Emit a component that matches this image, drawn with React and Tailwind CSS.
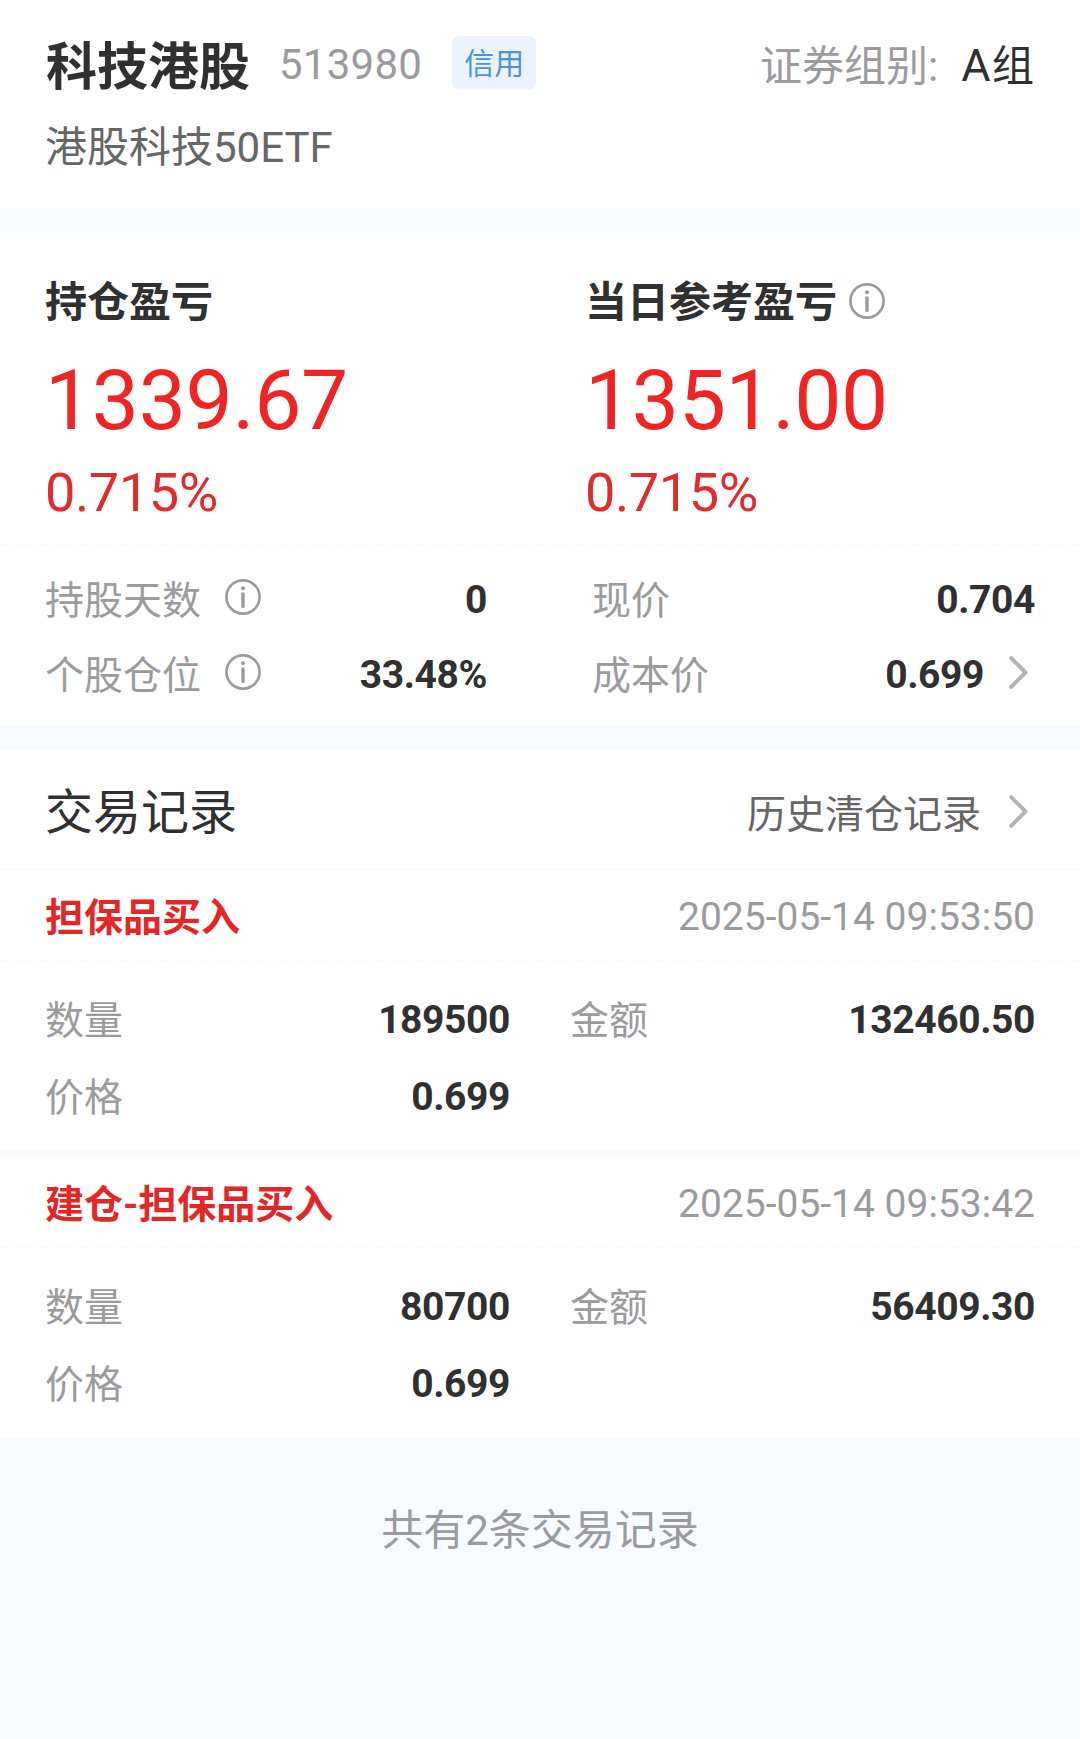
import React from 'react';

const trades = [
  {
    title: '担保品买入',
    time: '2025-05-14 09:53:50',
    quantity: '189500',
    amount: '132460.50',
    price: '0.699',
  },
  {
    title: '建仓-担保品买入',
    time: '2025-05-14 09:53:42',
    quantity: '80700',
    amount: '56409.30',
    price: '0.699',
  },
];

const InfoIcon = () => (
  <svg className="w-9 h-9 shrink-0" viewBox="0 0 36 36" fill="none" stroke="#9b9b9d">
    <circle cx="18" cy="18" r="16.6" strokeWidth="2.6" />
    <circle cx="18" cy="9.2" r="2" fill="#9b9b9d" stroke="none" />
    <path d="M18 15v12.5" strokeWidth="3.4" strokeLinecap="round" />
  </svg>
);

const ChevronIcon = () => (
  <svg className="w-[19px] h-[33px] shrink-0" viewBox="0 0 19 33" fill="none">
    <path d="M2.2 2.2l14.3 14.3L2.2 30.8" stroke="#b4b4b6" strokeWidth="4" strokeLinecap="round" strokeLinejoin="round" />
  </svg>
);

const Divider = () => <div className="h-px border-t border-dashed border-[#f8f8f9]"></div>;

const ProfitBlock = ({ label, amount, percent, info }) => (
  <div className="w-[541px] pl-[45px]">
    <div className="flex items-center gap-3 h-[60px] text-[42px] font-bold">
      <span className="mt-1">{label}</span>
      {info && <InfoIcon />}
    </div>
    <p className="mt-5 h-[100px] leading-[100px] text-[84px] tracking-[-0.35px] text-[#f02424]">{amount}</p>
    <p className="mt-3 h-[60px] leading-[60px] text-[54px] tracking-[-0.4px] text-[#df2c2c]">{percent}</p>
  </div>
);

const Field = ({ label, value, info, arrow }) => (
  <div className="flex items-center justify-between h-[75px] text-[39px]">
    <div className="flex items-center gap-6 text-[#9b9b9d]">
      <span className="mt-0.5">{label}</span>
      {info && (
        <span className="mb-2">
          <InfoIcon />
        </span>
      )}
    </div>
    <div className="flex items-center">
      <span className="font-bold tracking-[-0.4px]">{value}</span>
      {arrow && (
        <span className="ml-[25px] mr-[7px] mb-1.5">
          <ChevronIcon />
        </span>
      )}
    </div>
  </div>
);

const TradeField = ({ label, value }) => (
  <div className="flex items-center justify-between h-[77px]">
    <span className="mt-1 text-[#9b9b9d]">{label}</span>
    <span className="mt-0.5 font-bold tracking-[-0.4px]">{value}</span>
  </div>
);

const TradeCard = ({ trade }) => (
  <div className="bg-white">
    <div className="flex items-center justify-between h-[90px] px-[45px]">
      <span className="mt-[7px] text-[39px] font-bold text-[#e32626]">{trade.title}</span>
      <span className="mt-[5px] text-[39px] text-[#9b9b9d]">{trade.time}</span>
    </div>
    <Divider />
    <div className="grid grid-cols-[465px_465px] gap-x-[60px] h-[190px] pt-[20px] pb-[16px] pl-[45px] text-[39px]">
      <TradeField label="数量" value={trade.quantity} />
      <TradeField label="金额" value={trade.amount} />
      <TradeField label="价格" value={trade.price} />
    </div>
  </div>
);

const App = () => {
  return (
    <div className="w-[1080px] h-[1739px] bg-[#f7faff] text-[#303030] font-['Roboto','Noto_Sans_CJK_SC',sans-serif] leading-none whitespace-nowrap overflow-hidden">
      <header className="h-[208px] bg-white pl-[45px] pr-[46px] pt-[31px]">
        <div className="flex items-center justify-between h-[70px]">
          <div className="flex items-center">
            <h1 className="ml-px mt-0.5 text-[51px] font-bold">科技港股</h1>
            <span className="ml-[29px] mb-0.5 text-[42px] tracking-[0.25px] text-[#9b9b9d]">513980</span>
            <span className="ml-[30px] mb-[7px] pt-[3px] flex items-center justify-center w-[84px] h-[53px] rounded-md bg-[#ecf2fe] text-[30px] text-[#4b94dd]">信用</span>
          </div>
          <div className="flex items-center text-[42px]">
            <span className="mt-px text-[#9b9b9d]">证券组别:</span>
            <span className="ml-[23px] mb-0.5">
              <span className="text-[45px] tracking-[1.5px]">A</span>组
            </span>
          </div>
        </div>
        <p className="mt-[17px] h-[60px] leading-[60px] text-[42px] text-[#666666]">港股科技50ETF</p>
      </header>

      <section className="mt-6 h-[493px] bg-white">
        <div className="flex h-[312px] pt-[39px]">
          <ProfitBlock label="持仓盈亏" amount="1339.67" percent="0.715%" />
          <ProfitBlock label="当日参考盈亏" amount="1351.00" percent="0.715%" info />
        </div>
        <Divider />
        <div className="flex justify-between px-[45px] pt-[18px]">
          <div className="w-[442px]">
            <Field label="持股天数" value="0" info />
            <Field label="个股仓位" value="33.48%" info />
          </div>
          <div className="w-[443px]">
            <Field label="现价" value="0.704" />
            <Field label="成本价" value="0.699" arrow />
          </div>
        </div>
      </section>

      <section className="mt-6">
        <div className="flex items-center justify-between h-[120px] pl-[45px] pr-[52px] bg-white">
          <h2 className="mt-2 text-[48px]">交易记录</h2>
          <div className="flex items-center gap-[28px] text-[39px] text-[#666666]">
            <span className="mt-[13px]">历史清仓记录</span>
            <span className="mt-1">
              <ChevronIcon />
            </span>
          </div>
        </div>
        <Divider />
        <div className="flex flex-col gap-1.5">
          {trades.map((trade) => (
            <TradeCard key={trade.time} trade={trade} />
          ))}
        </div>
      </section>

      <p className="mt-[63px] h-[60px] leading-[60px] text-center text-[42px] text-[#9b9b9d]">共有2条交易记录</p>
    </div>
  );
};

export default App;
